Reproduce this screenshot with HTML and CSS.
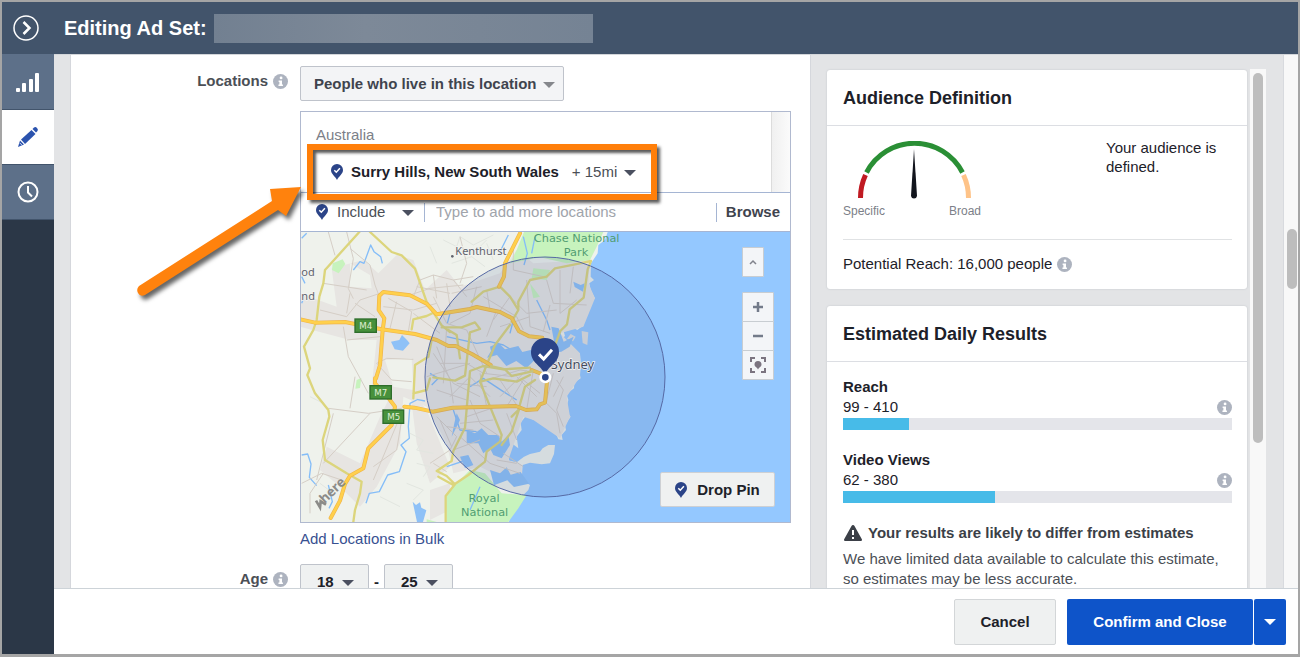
FILE: index.html
```
<!DOCTYPE html>
<html lang="en">
<head>
  <meta charset="UTF-8" />
  <meta name="viewport" content="width=device-width, initial-scale=1.0" />
  <title>Editing Ad Set</title>
  <link rel="stylesheet" href="styles.css">
</head>
<body>
  <!-- shared icons -->
  <svg class="defs" width="0" height="0" aria-hidden="true">
    <symbol id="info" viewBox="0 0 16 16">
      <circle cx="8" cy="8" r="8" fill="#adb3bf"/>
      <circle cx="8.6" cy="4.2" r="1.5" fill="#fff"/>
      <path d="M6 6.8h3.6v4.4h1v1.6H5.8v-1.6h1V8.400H6z" fill="#fff"/>
    </symbol>
    <symbol id="pin" viewBox="0 0 12 16">
      <path d="M6 0a6 6 0 0 1 6 6c0 4-4 6-6 10C4 12 0 10 0 6a6 6 0 0 1 6-6z" fill="#2b4488"/>
      <path d="M3.300 6.200l2 2 3.600-4" fill="none" stroke="#fff" stroke-width="1.500"/>
    </symbol>
  </svg>

  <header class="topbar">
    <button class="collapse" aria-label="Collapse">
      <svg width="26" height="26" viewBox="0 0 26 26" fill="none" stroke="#fff">
        <circle cx="13" cy="13" r="12" stroke-width="1.500"/>
        <path d="M10.500 7l6 6-6 6" stroke-width="2.500"/>
      </svg>
    </button>
    <h1>Editing Ad Set:</h1>
    <span class="hidden-name"></span>
  </header>

  <div class="app">
    <nav class="sidebar">
      <a href="#" class="tab" aria-label="Charts">
        <svg width="24" height="20" viewBox="0 0 24 20" fill="#fff">
          <rect x="0" y="16" width="4" height="4" rx="1"/><rect x="6" y="11" width="4" height="9" rx="1"/>
          <rect x="13" y="7" width="4" height="13" rx="1"/><rect x="19" y="1" width="4" height="19" rx="1"/>
        </svg>
      </a>
      <a href="#" class="tab active" aria-label="Edit">
        <svg width="22" height="22" viewBox="0 0 22 22" fill="#2b53ae">
          <path d="M4 13.500L14.500 4l4 4L8 18z"/><path d="M15.500 3l1.500-1.500q1.500-1 3 .5t.5 3L19 6.500z"/>
          <path d="M3 14.500L7 18.500 1 21z"/><path d="M2.800 17l2 2" stroke="#fff" stroke-width=".8"/>
        </svg>
      </a>
      <a href="#" class="tab" aria-label="History">
        <svg width="22" height="22" viewBox="0 0 22 22" fill="none" stroke="#fff" stroke-width="2">
          <circle cx="11" cy="11" r="9.500"/><path d="M11 5v6.500l4 4"/>
        </svg>
      </a>
    </nav>

    <div class="editor">
      <div class="work">
        <main class="panel">
          <div class="label">Locations <svg class="info"><use href="#info"/></svg></div>
          <div class="field">
            <span class="select muted"><select class="box" aria-label="Location type"><option>People who live in this location</option></select></span>
            <div class="locations">
              <div class="chosen">
                <div class="chosen-list">
                  <div class="country">Australia</div>
                  <div class="place">
                    <svg class="pin"><use href="#pin"/></svg>
                    <b>Surry Hills, New South Wales</b>
                    <span class="select"><select class="plain" aria-label="Radius"><option>+ 15mi</option></select></span>
                  </div>
                </div>
                <div class="track"></div>
              </div>
              <div class="search">
                <svg class="pin"><use href="#pin"/></svg>
                <span class="select"><select class="plain include" aria-label="Include or exclude"><option>Include</option></select></span>
                <input type="text" aria-label="Add locations" placeholder="Type to add more locations">
                <button class="browse">Browse</button>
              </div>
              <div class="map">
                <svg class="map-art" viewBox="3 6 1467 870" preserveAspectRatio="xMinYMid slice">
                  <rect x="3" y="6" width="2400" height="870" fill="#94c8ff"/>
                  <!-- land -->
                  <path fill="#eff2ec" d="M0 0H925L915 30 895 45 893 70 873 100 872 140 882 150 868 160 872 180 885 205 862 222 865 240 850 262 852 285 832 300 815 292 790 300 795 318 775 335 800 345 785 365 820 360 840 372 843 400 840 435 842 445 823 458 822 475 800 492 805 510 797 540 812 560 795 585 798 600 785 615 788 630 775 628 765 605 748 602 742 575 752 570 722 555 700 570 680 555 662 578 665 600 650 620 655 655 635 640 625 665 627 692 650 697 672 680 690 672 720 665 728 655 745 645 765 645 762 672 750 700 725 703 690 698 668 705 665 750 690 765 685 780 665 800 655 830 635 850 625 880H0z"/>
                  <path fill="#e1e1df" d="M845 303l20 4-3 38-14-6-2-20zM812 312l15 8-8 14-18-8z"/>
                  <!-- built up areas -->
                  <g fill="#e7e5e2">
                    <path d="M95 115L190 90 235 130 290 75 340 90 375 180 440 120 480 170 600 130 650 60 700 100 870 90 865 160 885 205 850 290 780 310 840 370 840 440 800 500 810 560 780 625 700 570 670 560 625 690 665 705 665 750 600 740 540 710 460 730 440 640 380 530 310 500 300 640 230 770 180 830 120 770 60 720 80 650 180 700 240 560 270 500 215 470 230 330 150 330 0 290V190L110 230z"/>
                    <path d="M330 480l50 60 70 170-60 50-40-120zM390 780l60-20v80l-60 30z"/>
                  </g>
                  <path fill="#eff2ec" d="M150 100l60 35 5 40-65-5zM30 315l100 15 60 110-50 60H25zM255 390l80-5 5 95-60-10z"/>
                  <!-- parks -->
                  <g fill="#c7f3bd">
                    <path d="M672 6H910L890 50 870 90 800 100 720 82 630 100 650 60zM98 100l30-12 8 14-20 28-20-10zM170 450l14-6-4 30-14 2z"/>
                    <path d="M440 876V790l70-70 45 10 50 60 75 5-25 40-30 41zM700 115l50 5-10 30-45-5zM380 868l30 8h-30zM690 160l30 40-20 5z"/>
                  </g>
                  <!-- hill texture -->
                  <g fill="none" stroke="#e2e6e0" stroke-width="3">
                    <path d="M430 30l40 20 10-30 40 25 60-30M455 100l60-20 40 30M390 50l20 50M330 610l40 20-20 30 50 10M350 700l40 10-20 30M320 760l50 20-30 30M240 800l60 30M560 40l20 50M530 60l30-30M60 760l40 30M30 500l40 20"/>
                  </g>
                  <!-- creeks, harbour and bays -->
                  <g fill="none" stroke="#84bdf8" stroke-width="4" stroke-linejoin="round">
                    <path d="M5 25l15-15M5 140l10 20M5 220l5-12M160 120l20-25 12 5 20-55 10 20 20 15 5 20M595 75l30-60M350 508l25 5M350 510l-20 10-5 70 3 35-25 20 15 20-20 60-35 10-25 50-30 5-10 30M5 675l18-3 10 30-5 40 22 25M85 765l12 50-10 20M670 20l12 50-10 35M705 20l-10 50M440 320l90 20 40-5 40 10 50 30 50 15M450 250l-8 30M710 210l30 60 10 30M640 270l-10 40M390 430l25 15-20 20M510 470l40-25 60 40 40 25M460 540l20 60 50 5M440 710l60-20M540 770l-30 70"/>
                  </g>
                  <g fill="#8ec1f7">
                    <path d="M273 335l25-5 8-15 15 15 8 10-20 22-25-4zM338 815l10 10 12-8 4 16 15 8-10 35h-18z"/>
                    <path d="M570 350l25-12 20 20 40-10 12 18 25-6 30 12 22-42 20 15-10-55 22 5 15 40 30-15-12 30-25 15-40 5-20 35-20-15-25 25-30-22-30 15-28-33-30 8 12-20z"/>
                    <path d="M820 155l22 10 12-5-5 25-25-14z"/>
                    <path d="M500 600l25 10 20-15 20 20 30 0 10 20 20-20 5 30-25 40-25-10-10-20-20 15-15-30-35 0zM570 720l30 10 20-18 12 22 30-8 25 35-45 10-20-20-40 15z"/>
                    <path d="M480 680l25-5 15 30-25 10zM470 550l10 20-25 50 8-40z"/>
                  </g>
                  <!-- minor streets -->
                  <g fill="none" stroke="#d5cec6" stroke-width="3" stroke-linejoin="round">
                    <path d="M85 6l20 70M140 6l20 80-15 90 15 30M150 55l60 50 15 60 15 40M70 160l130 20M60 240l80 20 40-50 60-20M150 190l-10 60M165 220l60 40M130 290l15 90 60 110M140 330l100-10M340 200l20-50 40-15 60 15 40 50M330 195l60-20 100-10M350 170l100 20M400 135l10 70M250 230l90 10 70-20M265 205l70 40-10 60M290 215l-20 80M340 250l80 60M400 200l40 80 60 20M230 400l30-15 80 3M230 400l45 50 60 5M85 535l120 15 100-15M100 550l-50 200M70 700l140-150M5 760l60-30 60 20M30 790l40-60M30 790v60M165 440l-15 95M310 540l-20 120-70 50M300 560l-80 190M390 700l60-40 20-40-60-60M400 700l40 25M420 570l35 80M480 20l20 80-20 60M460 150l60-10M480 620l90 80 90 30M440 160l10 70"/>
                    <path d="M420 400h80l50 30 90 10M400 370l60 90 80 40M410 350l40 100 10 70M380 440l130-40M440 290l-10 170M530 170l-20 80-60 30M560 180l10 60M590 240l-30 80M500 300l60 130M450 500l60-60 60 60M550 200l100 60 20 40M620 190l60 60 90-10M640 60v60l90 20M680 150l10 140 60 20M740 150l20 70 100 5M750 225l-20 80M780 120v130l50-40M820 110l-10 80M600 450l60 90M560 450l100-30 70 10M600 500l80-80M620 530l50-80 50 40M510 510l30 70 60 40M500 560l90-30M480 580l100-10M620 550l30 80M470 460l90 10M540 430l20 100M700 420l-20 120M650 440l60 60M760 430l-20 80M770 450l20 30-20 60 20 50M740 520l30 30 10 60M790 440l-30 60M610 670l60 40M590 690l60 10M455 190l90-20M410 480l90 30M600 290l90-30M630 200l-50 70M460 660l80-30M440 590l80 10"/>
                  </g>
                  <!-- secondary roads -->
                  <g fill="none" stroke="#dcd57c" stroke-width="7" stroke-linejoin="round" stroke-linecap="round">
                    <path d="M178 6L75 120 70 160 58 200 50 270 40 300 12 350 30 415 22 435 45 490 85 540 88 560 68 630 75 690 140 730 185 755 180 790 165 840 160 876"/>
                    <path d="M210 6l65 60 30 10 40 40 35 100 45 70 25 20"/>
                    <path d="M340 268l40-10 25-12M340 268l-5 30M395 330l-10 50-40 25-5 100M340 490l40-10 10-35"/>
                    <path d="M515 215l35-30 50-15 30 30 25 40-20 35M655 240v-25l35-65 50-10 25-25 60-12 48-10-10 25-12 85-42 35-8 45-20 20-15 40"/>
                    <path d="M425 292l60 0 40-15 15 20-30 10-15 130-30 15-65-10M445 300l25 15 10 70M630 285l-45 60-25 60-20 50 20 50 45 110-5 20-40 30-5 30-50 40-45 30-45-25M465 763l-25-25-30-15 45-30 5-30 35-70 15-170 40-15 60 10 80-5M540 455l40-10 70 10 40-20M465 763l-28 35v80M660 530l-25 75-30 40M635 560l20-20 20-70 30-20"/>
                  </g>
                  <!-- motorways -->
                  <defs>
                    <g id="motorways">
                      <path d="M0 268l45 10 90-2 110 22 100 14 65 18 35 18h22l50 25 55 32"/>
                      <path d="M228 445l12-40 8-105 5-35-17-25 2-43 12-11 80 10 50 25 30 32 100-16 20-6 70 15 35 18 22 40 30 15 40 4M225 445v15l45 50 15 20-10 55-70 70-15 60-40 22-15 25-15 50-28 52"/>
                      <path d="M313 530l30 3 55 12 60-12 190-5 30 12 32-2 10-15 15-5 8-85M660 10l-20 40-25 50-3 40-15 30M695 420l30 12"/>
                    </g>
                  </defs>
                  <use href="#motorways" class="road-edge"/>
                  <use href="#motorways" class="road"/>
                  <path fill="none" stroke="#dcd57c" stroke-width="7" d="M570 408l45 10 20 20 45-10 20-5"/>
                  <circle cx="735" cy="441" r="360" fill="#43609a" fill-opacity=".15" stroke="#5669a4" stroke-width="3"/>
                  <g class="sign">
                    <rect x="165" y="267" width="64" height="40"/><text x="197" y="298">M4</text>
                    <rect x="210" y="467" width="64" height="40"/><text x="242" y="498">M7</text>
                    <rect x="249" y="540" width="62" height="40"/><text x="281" y="571">M5</text>
                  </g>
                  <g class="town">
                    <circle cx="457" cy="79" r="4"/>
                    <text x="466" y="75">Kenthurst</text>
                    <text x="4" y="139">od</text><text x="4" y="211">nd</text>
                    <text x="752" y="416" class="city">Sydney</text>
                  </g>
                  <g class="park">
                    <text x="830" y="36">Chase National</text><text x="828" y="79">Park</text>
                    <text x="552" y="817">Royal</text><text x="554" y="858">National</text>
                  </g>
                  <path d="M48 812l12 20 2-18 16 10" fill="none" stroke="#8b8b88" stroke-width="8"/>
                  <text class="here" transform="translate(74 822) rotate(-44)">here</text>
                  <path d="M735 324a42 42 0 0 1 42 42c0 33-30 39-42 68-12-29-42-35-42-68a42 42 0 0 1 42-42z" fill="#2b4488"/>
                  <path d="M717 373l14 14 25-28" fill="none" stroke="#fff" stroke-width="9"/>
                  <circle cx="736" cy="442" r="14" fill="#2b4488" stroke="#fff" stroke-width="8"/>
                </svg>
                <button class="map-btn tilt" aria-label="Collapse map controls"><svg width="8" height="6" viewBox="0 0 8 6"><path d="M1 5l3-3 3 3" fill="none" stroke="#81838c" stroke-width="1.500"/></svg></button>
                <div class="zoom">
                  <button class="map-btn" aria-label="Zoom in"><svg width="10" height="10" viewBox="0 0 10 10"><path d="M5 0v10M0 5h10" stroke="#737b8a" stroke-width="2.500"/></svg></button>
                  <button class="map-btn" aria-label="Zoom out"><svg width="10" height="10" viewBox="0 0 10 10"><path d="M0 5h10" stroke="#737b8a" stroke-width="2.500"/></svg></button>
                  <button class="map-btn" aria-label="Center on pin"><svg width="16" height="16" viewBox="0 0 16 16"><path d="M1 5V1h4M11 1h4v4M15 11v4h-4M5 15H1v-4" fill="none" stroke="#7b7480" stroke-width="2"/><path d="M8 4a3.500 3.500 0 0 1 3.500 3.500C11.500 10 9 10 8 12.500 7 10 4.500 10 4.500 7.500A3.500 3.500 0 0 1 8 4z" fill="#7b7480"/></svg></button>
                </div>
                <button class="drop-pin"><svg class="pin"><use href="#pin"/></svg>Drop Pin</button>
              </div>
              <div class="highlight"></div>
              <svg class="arrow" width="176" height="126" viewBox="0 0 176 126">
                <path d="M4 101L137 16 135 4 166 2 151 31 143 25 10 110q-5 2-7-2t1-7z" fill="#ff820d"/>
              </svg>
            </div>
            <a href="#" class="bulk">Add Locations in Bulk</a>
          </div>
          <div class="label">Age <svg class="info"><use href="#info"/></svg></div>
          <div class="field ages">
            <span class="select"><select class="box age" aria-label="Minimum age"><option>18</option></select></span>
            <b>-</b>
            <span class="select"><select class="box age" aria-label="Maximum age"><option>25</option></select></span>
          </div>
        </main>

        <aside class="side">
          <section class="card">
            <h2>Audience Definition</h2>
            <div class="card-body">
              <div class="audience">
                <div class="gauge">
                  <svg width="138" height="58" viewBox="0 0 138 58" fill="none" stroke-width="5">
                    <path d="M17.500 57A54 54 0 0 1 22.500 34" stroke="#c01a22"/>
                    <path d="M23.500 31.500A54 54 0 0 1 119.500 31.500" stroke="#2a8f35"/>
                    <path d="M120.500 34A54 54 0 0 1 125.500 57" stroke="#fec388"/>
                    <path d="M71 8l3 47q-.5 2.500-3 2.500T68 55z" fill="#12151d"/>
                  </svg>
                  <div class="scale"><span>Specific</span><span>Broad</span></div>
                </div>
                <p>Your audience is defined.</p>
              </div>
              <div class="potential">Potential Reach: 16,000 people <svg class="info"><use href="#info"/></svg></div>
            </div>
          </section>
          <section class="card">
            <h2>Estimated Daily Results</h2>
            <div class="card-body">
              <div class="result">
                <b>Reach</b>
                <div class="range">99 - 410 <svg class="info"><use href="#info"/></svg></div>
                <div class="bar"><div style="width: 17%"></div></div>
              </div>
              <div class="result">
                <b>Video Views</b>
                <div class="range">62 - 380 <svg class="info"><use href="#info"/></svg></div>
                <div class="bar"><div style="width: 39%"></div></div>
              </div>
              <div class="warning">
                <svg width="18" height="16" viewBox="0 0 18 16"><path d="M9 0q1 0 1.500 1L18 14.500q0 1.500-1 1.500H1q-1 0-1-1.500L7.500 1Q8 0 9 0z" fill="#3b3f47"/><path d="M9 5v5M9 12v2" stroke="#fff" stroke-width="2"/></svg>
                <b>Your results are likely to differ from estimates</b>
              </div>
              <p class="note">We have limited data available to calculate this estimate, so estimates may be less accurate.</p>
            </div>
          </section>
        </aside>
        <div class="scroll side-scroll"><div class="thumb"></div></div>
        <div class="scroll page-scroll"><div class="thumb"></div></div>
      </div>

      <footer class="actions">
        <button class="cancel">Cancel</button>
        <div class="confirm">
          <button>Confirm and Close</button>
          <button class="more" aria-label="More options"></button>
        </div>
      </footer>
    </div>
  </div>
</body>
</html>
```
FILE: styles.css
```
* { box-sizing: border-box; }
body { margin: 0; height: 100vh; display: flex; flex-direction: column; overflow: hidden; border: 2px solid #a5a5a5; border-bottom-width: 3px; font: 15px/20px "Liberation Sans", Arial, sans-serif; color: #1d2129; background: #fff; }
button, input, select { font: inherit; color: inherit; margin: 0; }
button { padding: 0; cursor: pointer; }
h1, h2, p { margin: 0; }
.defs { position: absolute; }
.info { width: 15px; height: 15px; flex: none; }
.pin { width: 12px; height: 16px; flex: none; }

/* header and sidebar */
.topbar { display: flex; align-items: center; height: 52px; flex: none; background: #42546b; color: #fff; padding-left: 11px; }
.topbar h1 { font-size: 20px; line-height: 24px; margin-left: 25px; white-space: nowrap; }
.collapse { display: flex; border: none; background: none; }
.hidden-name { width: 379px; height: 29px; margin: 0 7px; background: linear-gradient(90deg, #728091, #7d8998 40%, #758394); }
.app { display: flex; flex: 1; min-height: 0; }
.sidebar { width: 52px; flex: none; background: #2b3747; }
.tab { display: flex; align-items: center; justify-content: center; height: 55px; background: #5d7089; border-bottom: 1px solid #42546b; }
.tab:first-child { height: 56px; }
.tab.active { background: #fff; }

/* work area */
.editor { display: flex; flex-direction: column; flex: 1; min-width: 0; }
.work { display: flex; flex: 1; min-height: 0; overflow: hidden; background: #e3e4e6; padding-left: 16px; border-top: 1px solid #d3d6da; }
.panel { flex: 1; min-width: 0; display: grid; grid-template-columns: 217px 1fr; grid-template-rows: auto auto; align-content: start; column-gap: 12px; row-gap: 15px; padding: 11px 19px 0 0; background: #fff; border: solid #d5d7dc; border-width: 0 1px; }
.label { display: flex; justify-content: flex-end; align-items: center; gap: 5px; height: 30px; font-weight: bold; color: #4b4f56; }
.field { min-width: 0; }

/* selects */
.select { position: relative; display: inline-flex; }
.select::after { content: ""; position: absolute; right: 9px; top: 50%; margin-top: -2px; border: 6px solid transparent; border-top-color: #4b5060; border-bottom: none; pointer-events: none; }
.select.muted::after { border-top-color: #85878c; }
.select select { appearance: none; border: none; background: none; padding: 0 24px 0 0; outline: none; }
.select select.box { height: 35px; padding: 0 26px 0 13px; font-weight: bold; background: #f3f4f6; border: 1px solid #bfc3cb; border-radius: 2px; color: #3f444e; }
.select select.age { width: 69px; padding-left: 16px; background: #eff1f1; color: #1d2129; }
.ages { display: flex; align-items: center; gap: 5px; }
.ages .select::after { right: 15px; }

/* location picker */
.locations { position: relative; margin-top: 10px; border: 1px solid #b0b9cf; }
.chosen { display: flex; height: 81px; border-bottom: 1px solid #a5b5d3; }
.chosen-list { flex: 1; padding: 13px 0 0 15px; }
.country { color: #7c8088; }
.place { display: flex; align-items: center; gap: 8px; margin: 17px 0 0 15px; white-space: nowrap; }
.place .select { margin-left: 5px; color: #4b4f56; }
.place .select::after { right: 6px; }
.track { width: 19px; background: linear-gradient(90deg, #f0f0f0, #fbfbfb); border-left: 1px solid #dcdcdc; }
.search { display: flex; align-items: center; height: 39px; padding: 0 10px 0 15px; border-bottom: 1px solid #a5b5d3; }
.search .select { margin-left: 9px; color: #4b4f56; }
.search .include { width: 87px; }
.search .select::after { right: 10px; }
.search input { flex: 1; min-width: 0; height: 19px; padding: 0 0 0 11px; border: solid #a5b5d3; border-width: 0 1px; outline: none; background: none; }
.search input::placeholder { color: #a0a4ab; }
.browse { border: none; background: none; font-weight: bold; color: #3f444e; margin-left: 9px; }
.bulk { display: inline-block; margin-top: 6px; color: #385191; text-decoration: none; }

/* map */
.map { position: relative; height: 290px; overflow: hidden; background: #94c8ff; }
.map-art { display: block; width: 100%; height: 100%; }
.road-edge, .road { fill: none; stroke: #f0b54a; stroke-width: 12px; stroke-linejoin: round; stroke-linecap: round; }
.road { stroke: #ffd04c; stroke-width: 8px; }
.sign rect { fill: #47913c; stroke: #2e6d2b; stroke-width: 4px; }
.sign text { fill: #e0efd4; font: 26px "DejaVu Sans", sans-serif; text-anchor: middle; }
.town { fill: #60636c; font: 33px "Noto Sans", sans-serif; }
.town text { paint-order: stroke; stroke: #f4f4f2; stroke-width: 4px; }
.town .city { font-size: 39px; fill: #444c60; }
.park { fill: #519d72; font: 34px "DejaVu Sans", sans-serif; text-anchor: middle; }
.here { fill: #8b8b88; font: bold 40px "Noto Sans", sans-serif; }
.map-btn { display: flex; align-items: center; justify-content: center; width: 32px; height: 30px; margin-bottom: -1px; background: #f3f5f8; border: 1px solid #c8cdd2; border-radius: 1px; }
.tilt { position: absolute; top: 15px; right: 26px; width: 22px; }
.zoom { position: absolute; top: 60px; right: 16px; }
.drop-pin { position: absolute; right: 15px; bottom: 15px; display: flex; align-items: center; justify-content: center; gap: 10px; width: 115px; height: 35px; font-weight: bold; background: #eff1f1; border: 1px solid #cdd0d4; border-radius: 2px; }

/* callout over the chosen location */
.highlight { position: absolute; left: 6px; top: 32px; width: 350px; height: 56px; border: 6px solid #ff7f0a; box-shadow: 3px 3px 3px rgba(0, 0, 0, .65), inset 3px 3px 3px rgba(0, 0, 0, .65); pointer-events: none; }
.arrow { position: absolute; left: -166px; top: 73px; filter: drop-shadow(3px 4px 2px rgba(0, 0, 0, .6)); pointer-events: none; }

/* right column */
.side { width: 420px; flex: none; margin-left: 16px; padding-top: 15px; }
.card { margin-bottom: 17px; background: #fff; border-radius: 3px; box-shadow: 0 0 2px #bfc2c8; }
.card h2 { height: 56px; padding: 0 16px; font-size: 18px; line-height: 56px; border-bottom: 1px solid #dcdee3; }
.card-body { padding: 15px 15px 15px 16px; }
.audience { display: flex; justify-content: space-between; height: 99px; border-bottom: 1px solid #e0e2e4; }
.audience p { width: 126px; line-height: 19px; margin-top: -3px; }
.scale { display: flex; justify-content: space-between; font-size: 12px; line-height: 14px; color: #7c8088; }
.potential { display: flex; align-items: center; gap: 5px; padding-top: 14px; }
.result { margin-bottom: 20px; }
.result b { display: block; }
.range { display: flex; align-items: center; justify-content: space-between; }
.bar { height: 12px; margin-top: 1px; background: #e4e5ea; }
.bar div { height: 100%; background: #47bbe8; }
.warning { display: flex; align-items: center; gap: 6px; color: #3b3f47; white-space: nowrap; padding-left: 1px; }
.note { margin-top: 6px; color: #4b4f56; }

/* scrollbars */
.scroll { flex: none; background: #f8f8f8; }
.thumb { width: 10px; border-radius: 5px; background: #bdbdbd; }
.side-scroll { width: 16px; margin: 14px 17px 0 3px; padding: 4px 3px; }
.side-scroll .thumb { height: 370px; }
.page-scroll { width: 15px; border-left: 1px solid #d8dade; padding: 174px 0 0 3px; }
.page-scroll .thumb { height: 60px; }

/* footer */
.actions { display: flex; align-items: center; justify-content: flex-end; gap: 11px; height: 66px; flex: none; padding-right: 12px; border-top: 1px solid #cdd3d8; background: #fff; }
.actions button { height: 46px; font-weight: bold; }
.cancel { width: 102px; background: #eff1f1; border: 1px solid #d3d6d8; border-radius: 2px; }
.confirm { display: flex; gap: 1px; }
.confirm button { width: 186px; border: none; border-radius: 2px; background: #0e54c9; color: #fff; }
.confirm .more { display: flex; align-items: center; justify-content: center; width: 32px; }
.more::after { content: ""; border: 6px solid transparent; border-top-color: #fff; border-bottom: none; }
```
